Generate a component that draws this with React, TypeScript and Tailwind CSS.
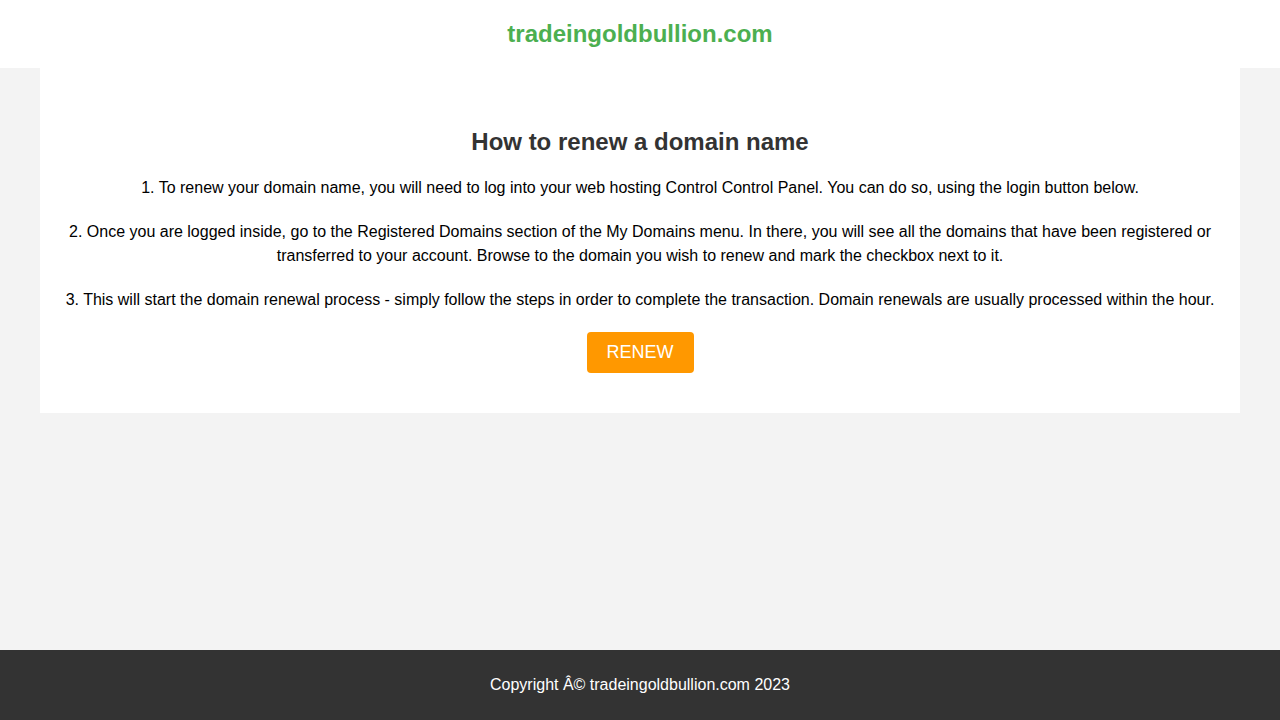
export default function App() {
  return (
    <div className="min-h-screen flex flex-col bg-[#f3f3f3] font-['Liberation_Sans',Arial,sans-serif]">
      {/* Header */}
      <header className="h-[68px] bg-white flex items-center justify-center">
        <h1 className="text-2xl font-bold text-[#4caf50]">tradeingoldbullion.com</h1>
      </header>

      {/* Main card */}
      <main className="flex-1 px-10">
        <div className="bg-white px-5 pt-[60px] pb-10 text-center">
          <h2 className="text-2xl font-bold text-[#333] leading-7 mb-5">How to renew a domain name</h2>
          <p className="text-base leading-6 text-black mb-5">
            1. To renew your domain name, you will need to log into your web hosting Control Control Panel. You can do so, using the login button below.
          </p>
          <p className="text-base leading-6 text-black mb-5">
            2. Once you are logged inside, go to the Registered Domains section of the My Domains menu. In there, you will see all the domains that have been registered or transferred to your account. Browse to the domain you wish to renew and mark the checkbox next to it.
          </p>
          <p className="text-base leading-6 text-black mb-5">
            3. This will start the domain renewal process - simply follow the steps in order to complete the transaction. Domain renewals are usually processed within the hour.
          </p>
          <button className="bg-[#ff9800] text-white text-lg leading-[21px] px-5 py-2.5 rounded">RENEW</button>
        </div>
      </main>

      {/* Footer */}
      <footer className="h-[70px] bg-[#333] flex items-center justify-center">
        <p className="text-base text-white">Copyright Â© tradeingoldbullion.com 2023</p>
      </footer>
    </div>
  );
}
